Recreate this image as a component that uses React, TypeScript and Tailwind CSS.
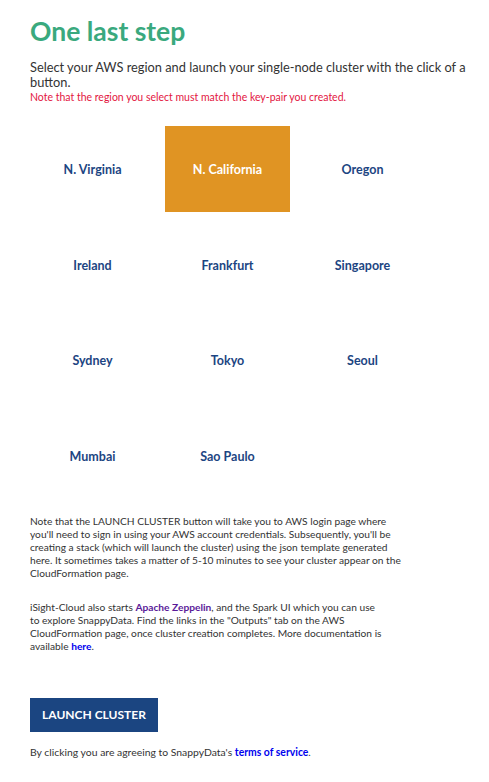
import React from "react";

const regions = [
  "N. Virginia",
  "N. California",
  "Oregon",
  "Ireland",
  "Frankfurt",
  "Singapore",
  "Sydney",
  "Tokyo",
  "Seoul",
  "Mumbai",
  "Sao Paulo",
];

export default function App() {
  const selected = "N. California";

  return (
    <div className="min-h-screen bg-white pl-[30px] pr-[20px] pt-[14px] pb-8 font-['Lato',sans-serif] text-[#333]">
      <h1 className="text-[26.5px] leading-[34px] font-bold text-[#3aa97e]">
        One last step
      </h1>

      <p className="mt-[12px] text-[12.8px] leading-[15px] text-[#333]">
        Select your AWS region and launch your single-node cluster with the click of a
        <br />
        button.
      </p>
      <p className="text-[10.5px] leading-[14px] text-[#e3163f]">
        Note that the region you select must match the key-pair you created.
      </p>

      <div className="mt-[22px] grid grid-cols-[repeat(3,125px)] gap-x-[10px] gap-y-[9.5px]">
        {regions.map((r) => (
          <div
            key={r}
            className={
              r === selected
                ? "flex h-[86px] items-center justify-center bg-[#e09423] pt-[3px] text-[12.5px] font-bold text-white"
                : "flex h-[86px] items-center justify-center pt-[3px] text-[12.5px] font-bold text-[#1c4582]"
            }
          >
            {r}
          </div>
        ))}
      </div>

      <div className="whitespace-nowrap text-[10.2px] leading-[13px] text-[#333]">
        <p className="mt-[16px]">
          Note that the LAUNCH CLUSTER button will take you to AWS login page where
          <br />
          you'll need to sign in using your AWS account credentials. Subsequently, you'll be
          <br />
          creating a stack (which will launch the cluster) using the json template generated
          <br />
          here. It sometimes takes a matter of 5-10 minutes to see your cluster appear on the
          <br />
          CloudFormation page.
        </p>
        <p className="mt-[21px]">
          iSight-Cloud also starts <a className="font-bold text-[#5a1a99]">Apache Zeppelin</a>, and
          the Spark UI which you can use
          <br />
          to explore SnappyData. Find the links in the "Outputs" tab on the AWS
          <br />
          CloudFormation page, once cluster creation completes. More documentation is
          <br />
          available <a className="font-bold text-[#0000ee]">here</a>.
        </p>
      </div>

      <button className="mt-[45.5px] flex h-[34px] w-[128px] items-center justify-center bg-[#1b4581] text-[12px] font-bold text-white">
        LAUNCH CLUSTER
      </button>

      <p className="mt-[14px] text-[10.4px] leading-[13px] text-[#333]">
        By clicking you are agreeing to SnappyData's{" "}
        <a className="font-bold text-[#0000ee]">terms of service</a>.
      </p>
    </div>
  );
}
